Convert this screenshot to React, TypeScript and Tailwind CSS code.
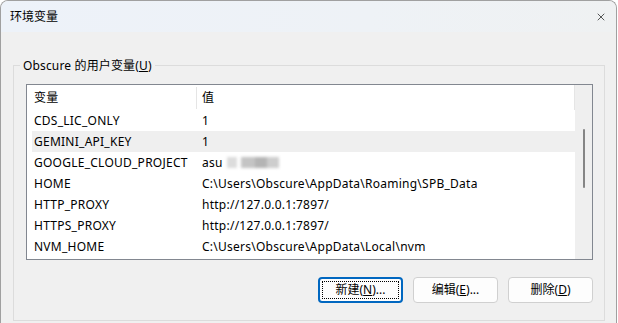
import { X } from 'lucide-react';

interface EnvVar {
  name: string;
  value: string;
  blurred?: boolean;
}

const VARS: EnvVar[] = [
  { name: 'CDS_LIC_ONLY', value: '1' },
  { name: 'GEMINI_API_KEY', value: '1' },
  { name: 'GOOGLE_CLOUD_PROJECT', value: 'asu', blurred: true },
  { name: 'HOME', value: 'C:\\Users\\Obscure\\AppData\\Roaming\\SPB_Data' },
  { name: 'HTTP_PROXY', value: 'http://127.0.0.1:7897/' },
  { name: 'HTTPS_PROXY', value: 'http://127.0.0.1:7897/' },
  { name: 'NVM_HOME', value: 'C:\\Users\\Obscure\\AppData\\Local\\nvm' },
];

const FONT = "font-['Noto_Sans','Noto_Sans_CJK_SC',sans-serif]";

function DlgButton({ label, hotkey, rest, focused }: { label: string; hotkey: string; rest: string; focused?: boolean }) {
  return (
    <button
      className={`relative w-[85px] h-[26px] rounded-[4px] bg-[#fdfdfd] text-[12px] text-black flex items-center justify-center ${
        focused ? 'border-2 border-[#0067c0]' : 'border border-[#d0d0d0]'
      }`}
    >
      {focused && <span className="absolute inset-[2px] border border-dotted border-black pointer-events-none" />}
      <span>
        {label}(<span className="underline">{hotkey}</span>){rest}
      </span>
    </button>
  );
}

export default function App() {
  return (
    <div className={`w-[618px] h-[323px] bg-white ${FONT}`}>
      <div className="w-[617px] h-[323px] flex flex-col bg-[#f0f0f0] border-l border-r border-t border-[#a0a0a0] rounded-t-[8px] overflow-hidden">
        {/* Title bar */}
        <div className="h-[31px] shrink-0 flex items-center justify-between pl-[9px] pr-[9px] bg-[linear-gradient(90deg,#edf2f9,#eef2f6_60%,#eff1f2)] text-[12px] text-black">
          <span>环境变量</span>
          <X className="w-[12px] h-[12px] text-black" strokeWidth={1.3} />
        </div>

        {/* Body */}
        <div className="flex-1 pl-[12px] pr-[11px] pt-[33px]">
          {/* Group box */}
          <div className="relative h-[256px] border border-[#dcdcdc] pl-[12px] pr-[11px] pt-[18px]">
            <span className="absolute left-[6px] top-[-9px] px-[3px] bg-[#f0f0f0] text-[12px] leading-[17px] tracking-[0.15px] text-black">
              Obscure 的用户变量(<span className="underline">U</span>)
            </span>

            {/* List view */}
            <div className="h-[176px] border border-[#828790] bg-white flex text-[12px] tracking-[0.25px] text-black">
              <div className="flex-1 flex flex-col">
                <div className="h-[25px] shrink-0 flex items-center border-r border-[#e5e5e5]">
                  <div className="w-[170px] h-[22px] flex items-center pl-[7px] border-r border-[#e5e5e5]">变量</div>
                  <div className="pl-[5px]">值</div>
                </div>
                {VARS.map((v, i) => (
                  <div
                    key={v.name}
                    className={`ml-[5px] h-[21px] shrink-0 flex items-center ${i === 1 ? 'bg-[#efefef]' : ''}`}
                  >
                    <div className="w-[164px] pl-[2px] whitespace-nowrap">{v.name}</div>
                    <div className="pl-[6px] whitespace-nowrap flex items-center">
                      {v.value}
                      {v.blurred && (
                        <span className="ml-[4px] flex items-center blur-[1.5px]">
                          <span className="w-[10px] h-[11px] bg-[#dcdcdc]" />
                          <span className="w-[14px] h-[11px] bg-[#c4c4c4] ml-[4px]" />
                          <span className="w-[12px] h-[11px] bg-[#b4b4b4]" />
                          <span className="w-[12px] h-[11px] bg-[#cdcdcd]" />
                        </span>
                      )}
                    </div>
                  </div>
                ))}
              </div>
              {/* Scrollbar */}
              <div className="w-[17px] bg-[#efefef] flex justify-center pt-[44px]">
                <div className="w-[2px] h-[59px] rounded-full bg-[#858585]" />
              </div>
            </div>

            {/* Buttons */}
            <div className="flex justify-end gap-[10px] mt-[17px]">
              <DlgButton label="新建" hotkey="N" rest="..." focused />
              <DlgButton label="编辑" hotkey="E" rest="..." />
              <DlgButton label="删除" hotkey="D" rest="" />
            </div>
          </div>
        </div>
      </div>
    </div>
  );
}
